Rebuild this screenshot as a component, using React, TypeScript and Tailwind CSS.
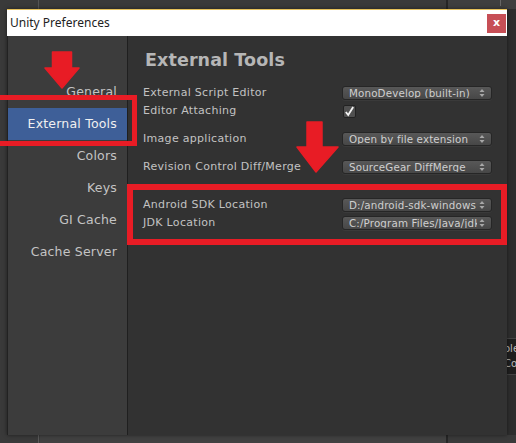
import React from "react";

const font = { fontFamily: '"DejaVu Sans", Verdana, sans-serif' };

function Arrows() {
  return (
    <svg className="w-[10px] h-[12px] ml-auto mr-[4px] shrink-0" viewBox="0 0 10 12">
      <path d="M5 2 L7.5 5 L2.5 5 Z" fill="#a8a8a8" />
      <path d="M5 10 L7.5 7 L2.5 7 Z" fill="#a8a8a8" />
    </svg>
  );
}

function Dropdown({ text }: { text: string }) {
  return (
    <div className="w-[150px] h-[14px] rounded-[3px] border border-[#262626] bg-gradient-to-b from-[#585858] to-[#474747] flex items-center pl-[6px] text-[10.3px] leading-none text-[#cfcfcf] tracking-[0.15px] overflow-hidden whitespace-nowrap shadow-[0_1px_0_#3a3a3a]">
      <span className="overflow-hidden">{text}</span>
      <Arrows />
    </div>
  );
}

function Row({ label, children, className = "" }: { label: string; children: React.ReactNode; className?: string }) {
  return (
    <div className={"h-[18px] flex items-center " + className}>
      <div className="w-[199px] text-[11px] text-[#c2c2c2] tracking-[0.3px] whitespace-nowrap">{label}</div>
      {children}
    </div>
  );
}

export default function App() {
  const items = ["General", "External Tools", "Colors", "Keys", "GI Cache", "Cache Server"];
  return (
    <div className="relative w-[516px] h-[443px] bg-[#3a3a3a] overflow-hidden" style={font}>
      {/* desktop background details */}
      <div className="absolute left-[38px] top-0 w-px h-[9px] bg-[#555]" />
      <div className="absolute left-[446px] top-0 w-[2px] h-[9px] bg-[#262626]" />
      <div className="absolute left-[448px] top-0 w-[68px] h-[9px] bg-[#3f3f3f]" />
      <div className="absolute left-[500px] top-0 w-px h-[6px] bg-[#666]" />
      <div className="absolute left-[38px] top-[435px] w-px h-[8px] bg-[#5a5a5a]" />
      <div className="absolute left-[446px] top-[435px] w-[2px] h-[8px] bg-[#262626]" />
      <div className="absolute left-[40px] top-[435px] w-[406px] h-[8px] bg-[#414141]" />
      <div className="absolute left-[507px] top-[9px] w-[9px] h-[426px] bg-[#2e2e2e]" />
      <div className="absolute left-[507px] top-[338px] w-[9px] h-[37px] bg-[#1f1f1f] border-y border-[#444] text-[10px] text-[#bbb] leading-[15px] pt-[2px] overflow-hidden whitespace-nowrap">
        <div className="-ml-[3px]">ole</div>
        <div className="-ml-[3px]">Co</div>
      </div>

      {/* window */}
      <div className="absolute left-[7px] top-[9px] w-[500px] h-[426px] flex flex-col border-t border-[#e6c15a] shadow-[0_0_4px_rgba(0,0,0,0.5)]">
        <div className="h-[26px] bg-white flex items-center pl-[3px] pr-[1px] shrink-0">
          <span className="text-[12px] text-[#222]" style={{ fontFamily: '"Noto Sans", "DejaVu Sans", sans-serif' }}>Unity Preferences</span>
          <div className="ml-auto w-[19px] h-[19px] bg-[#c74f56] flex items-center justify-center text-white text-[11px] font-bold leading-none pb-[2px]">x</div>
        </div>
        <div className="flex flex-1 min-h-0">
          <div className="w-[121px] bg-[#3c3c3c] border-r border-[#1f1f1f] border-l border-l-[#222] pt-[40px] flex flex-col">
            {items.map((it) => (
              <div
                key={it}
                className={
                  "h-[32px] flex items-center justify-end pr-[10px] text-[12.5px] tracking-[0.2px] " +
                  (it === "External Tools" ? "bg-[#3e5f98] text-[#f0f0f0]" : "text-[#c4c4c4]")
                }
              >
                {it}
              </div>
            ))}
          </div>
          <div className="flex-1 bg-[#323232] pl-[15px] pr-[15px]">
            <div className="pt-[13px] h-[48px] pl-[2px]">
              <div className="h-[22px] flex items-center text-[17.5px] font-bold text-[#b6b6b6] tracking-[0.1px]">External Tools</div>
            </div>
            <Row label="External Script Editor"><Dropdown text="MonoDevelop (built-in)" /></Row>
            <Row label="Editor Attaching">
              <div className="w-[13px] h-[13px] ml-[1px] rounded-[2px] bg-[#505050] border border-[#222] flex items-center justify-center">
                <svg viewBox="0 0 12 12" className="w-[11px] h-[11px]">
                  <path d="M2 6.5 L4.6 9.8 L10 1.2" fill="none" stroke="#f4f4f4" strokeWidth="2" />
                </svg>
              </div>
            </Row>
            <Row label="Image application" className="mt-[10px]"><Dropdown text="Open by file extension" /></Row>
            <Row label="Revision Control Diff/Merge" className="mt-[10px]"><Dropdown text="SourceGear DiffMerge" /></Row>
            <Row label="Android SDK Location" className="mt-[20px]"><Dropdown text="D:/android-sdk-windows" /></Row>
            <Row label="JDK Location"><Dropdown text="C:/Program Files/Java/jdk1.8" /></Row>
          </div>
        </div>
      </div>

      {/* annotations */}
      <div className="absolute left-[-6px] top-[95px] w-[143px] h-[51px] border-[5px] border-[#e81c25]" />
      <div className="absolute left-[127px] top-[184px] w-[380px] h-[61px] border-[6px] border-[#e81c25]" />
      <svg className="absolute left-[44px] top-[51px] w-[36px] h-[38px]" viewBox="0 0 36 38">
        <path d="M8.5 1 H27.5 V17 H35 L18 37 L1 17 H8.5 Z" fill="#e81c25" strokeLinejoin="round" stroke="#e81c25" strokeWidth="1.5" />
      </svg>
      <svg className="absolute left-[296px] top-[121px] w-[43px] h-[52px]" viewBox="0 0 43 52">
        <path d="M11 1 H26 V26 H42 L20 51 L1 26 H11 Z" fill="#e81c25" strokeLinejoin="round" stroke="#e81c25" strokeWidth="1.5" />
      </svg>
    </div>
  );
}
